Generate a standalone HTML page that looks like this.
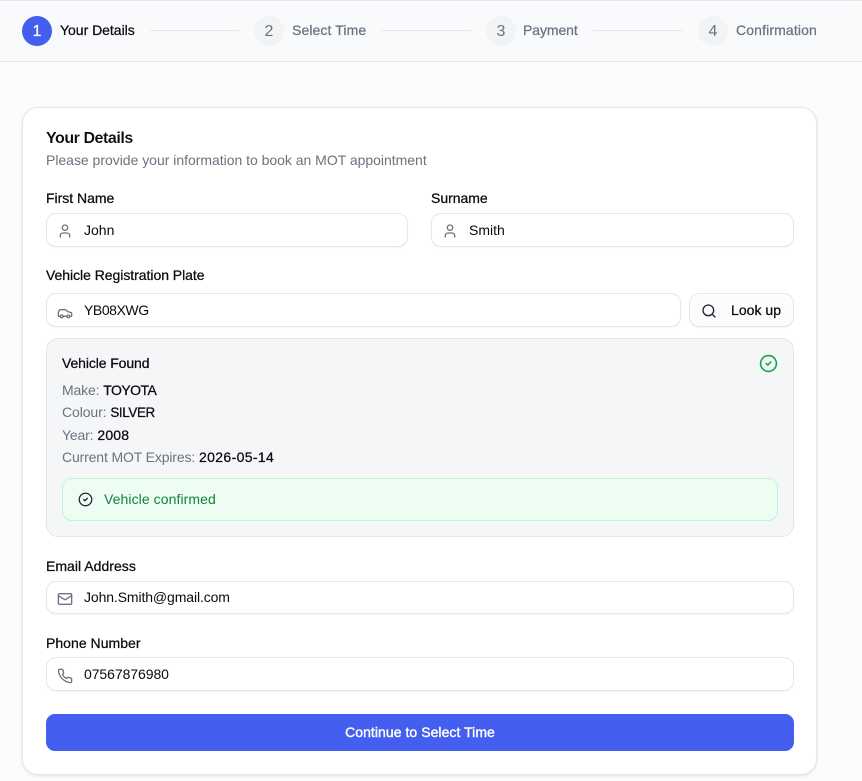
<!DOCTYPE html>
<html lang="en"><head><meta charset="utf-8"><title>Your Details</title>
<style>
*{box-sizing:border-box}
html,body{margin:0;padding:0}
body{width:862px;height:781px;position:relative;overflow:hidden;background:#fcfcfd;font-family:"Liberation Sans",Arial,sans-serif;font-size:14px;color:#0a0a0f}
.a{position:absolute}
.t{position:absolute;white-space:nowrap;line-height:20px;height:20px}
.m{-webkit-text-stroke:.25px currentColor}
.g{color:#6b7280}
.bar{left:0;top:0;width:862px;height:62px;background:#f9fafb;border-top:1px solid #e5e7eb;border-bottom:1px solid #e5e7eb}
.c{position:absolute;top:16px;width:30px;height:30px;border-radius:50%;background:#f1f3f5;color:#6b7280;font-size:16px;line-height:31px;text-align:center}
.l{position:absolute;top:30px;height:1px;background:#e5e7eb}
.card{left:22px;top:107px;width:795px;height:668px;background:#fff;border:1px solid #e5e7eb;border-radius:16px;box-shadow:0 1px 3px rgba(0,0,0,.1)}
.i{position:absolute;background:#fff;border:1px solid #e5e7eb;border-radius:10px;box-shadow:0 1px 1px rgba(0,0,0,.04)}
svg{position:absolute;fill:none;stroke-linecap:round;stroke-linejoin:round}
.ic{stroke:#6b7280;stroke-width:2}
</style></head><body>
<div class="a bar"></div>
<div class="c m" style="left:22px;background:#445ef0;color:#fff">1</div>
<div class="t m" style="left:60px;top:20px;letter-spacing:-.02px">Your Details</div>
<div class="l" style="left:150px;width:89px"></div>
<div class="c" style="left:254px">2</div>
<div class="t m g" style="left:292px;top:20px;letter-spacing:.1px">Select Time</div>
<div class="l" style="left:381px;width:90px"></div>
<div class="c" style="left:486px">3</div>
<div class="t m g" style="left:523px;top:20px;letter-spacing:-.08px">Payment</div>
<div class="l" style="left:593px;width:90px"></div>
<div class="c" style="left:698px">4</div>
<div class="t m g" style="left:736px;top:20px;letter-spacing:.13px">Confirmation</div>

<div class="a card"></div>
<div class="t" style="left:46px;top:129px;font-size:16px;font-weight:bold;letter-spacing:-.45px;-webkit-text-stroke:.1px #fff">Your Details</div>
<div class="t g" style="left:46px;top:150px;letter-spacing:-.02px">Please provide your information to book an MOT appointment</div>

<div class="t m" style="left:46px;top:188px;letter-spacing:-.02px">First Name</div>
<div class="i" style="left:46px;top:213px;width:362px;height:34px"></div>
<svg class="ic" style="left:57px;top:223px" width="16" height="16" viewBox="0 0 24 24"><path d="M19 21v-2a4 4 0 0 0-4-4H9a4 4 0 0 0-4 4v2"/><circle cx="12" cy="7" r="4"/></svg>
<div class="t" style="left:84px;top:220px">John</div>

<div class="t m" style="left:431px;top:188px;letter-spacing:-.02px">Surname</div>
<div class="i" style="left:431px;top:213px;width:363px;height:34px"></div>
<svg class="ic" style="left:442px;top:223px" width="16" height="16" viewBox="0 0 24 24"><path d="M19 21v-2a4 4 0 0 0-4-4H9a4 4 0 0 0-4 4v2"/><circle cx="12" cy="7" r="4"/></svg>
<div class="t" style="left:469px;top:220px">Smith</div>

<div class="t m" style="left:46px;top:265px;letter-spacing:-.04px">Vehicle Registration Plate</div>
<div class="i" style="left:46px;top:293px;width:635px;height:34px"></div>
<svg class="ic" style="left:57px;top:305px" width="16" height="16" viewBox="0 0 24 24"><path d="M19 17h2c.6 0 1-.4 1-1v-3c0-.9-.7-1.7-1.5-1.9C18.7 10.6 16 10 16 10s-1.3-1.4-2.2-2.3c-.5-.4-1.1-.7-1.8-.7H5c-.6 0-1.1.4-1.4.9l-1.4 2.9A3.7 3.7 0 0 0 2 12v4c0 .6.4 1 1 1h2"/><circle cx="7" cy="17" r="2"/><path d="M9 17h6"/><circle cx="17" cy="17" r="2"/></svg>
<div class="t" style="left:84px;top:300px;letter-spacing:-.43px">YB08XWG</div>
<div class="i" style="left:689px;top:293px;width:105px;height:34px;background:#fcfcfd"></div>
<svg style="left:701px;top:303px;stroke:#1f2430;stroke-width:2" width="16" height="16" viewBox="0 0 24 24"><circle cx="11" cy="11" r="8"/><path d="m21 21-4.3-4.3"/></svg>
<div class="t m" style="left:731px;top:300px;letter-spacing:.03px">Look up</div>

<div class="a" style="left:46px;top:338px;width:748px;height:199px;background:#f5f6f8;border:1px solid #e5e7eb;border-radius:12px"></div>
<div class="t m" style="left:62px;top:353px;letter-spacing:-.1px">Vehicle Found</div>
<svg style="left:759px;top:354px;stroke:#16a34a;stroke-width:2" width="19" height="19" viewBox="0 0 24 24"><circle cx="12" cy="12" r="10"/><path d="m9 12 2 2 4-4"/></svg>
<div class="t" style="left:62px;top:380px"><span class="g" style="letter-spacing:-.15px">Make:</span> <span class="m" style="letter-spacing:-.55px">TOYOTA</span></div>
<div class="t" style="left:62px;top:402px"><span class="g" style="letter-spacing:-.1px">Colour:</span> <span class="m" style="font-size:13.4px;letter-spacing:-.35px">SILVER</span></div>
<div class="t" style="left:62px;top:425px"><span class="g" style="letter-spacing:-.15px">Year:</span> <span class="m" style="letter-spacing:.2px">2008</span></div>
<div class="t" style="left:62px;top:447px"><span class="g" style="letter-spacing:-.14px">Current MOT Expires:</span> <span class="m" style="letter-spacing:.36px">2026-05-14</span></div>

<div class="a" style="left:62px;top:478px;width:716px;height:43px;background:#edfdf3;border:1px solid #bbf7d0;border-radius:10px"></div>
<svg style="left:78px;top:492px;stroke:#1b2230;stroke-width:2" width="15" height="15" viewBox="0 0 24 24"><circle cx="12" cy="12" r="10"/><path d="m9 12 2 2 4-4"/></svg>
<div class="t" style="left:104px;top:489px;color:#15803d;letter-spacing:.08px">Vehicle confirmed</div>

<div class="t m" style="left:46px;top:556px;letter-spacing:.03px">Email Address</div>
<div class="i" style="left:46px;top:581px;width:748px;height:33px"></div>
<svg class="ic" style="left:57px;top:591px" width="16" height="16" viewBox="0 0 24 24"><rect x="2" y="4" width="20" height="16" rx="2"/><path d="m22 7-8.97 5.7a1.94 1.94 0 0 1-2.06 0L2 7"/></svg>
<div class="t" style="left:84px;top:587px;letter-spacing:-.11px">John.Smith@gmail.com</div>

<div class="t m" style="left:46px;top:633px;letter-spacing:.03px">Phone Number</div>
<div class="i" style="left:46px;top:657px;width:748px;height:34px"></div>
<svg class="ic" style="left:57px;top:668px" width="16" height="16" viewBox="0 0 24 24"><path d="M22 16.92v3a2 2 0 0 1-2.18 2 19.79 19.79 0 0 1-8.63-3.07 19.5 19.5 0 0 1-6-6 19.79 19.79 0 0 1-3.07-8.67A2 2 0 0 1 4.11 2h3a2 2 0 0 1 2 1.72 12.84 12.84 0 0 0 .7 2.81 2 2 0 0 1-.45 2.11L8.09 9.91a16 16 0 0 0 6 6l1.27-1.27a2 2 0 0 1 2.11-.45 12.84 12.84 0 0 0 2.81.7A2 2 0 0 1 22 16.92z"/></svg>
<div class="t" style="left:84px;top:664px;letter-spacing:-.07px">07567876980</div>

<div class="a" style="left:46px;top:714px;width:748px;height:37px;background:#445ef0;border-radius:9px"></div>
<div class="t" style="left:46px;top:722px;width:748px;text-align:center;color:#fff;-webkit-text-stroke:.4px #fff;letter-spacing:.05px">Continue to Select Time</div>
</body></html>
